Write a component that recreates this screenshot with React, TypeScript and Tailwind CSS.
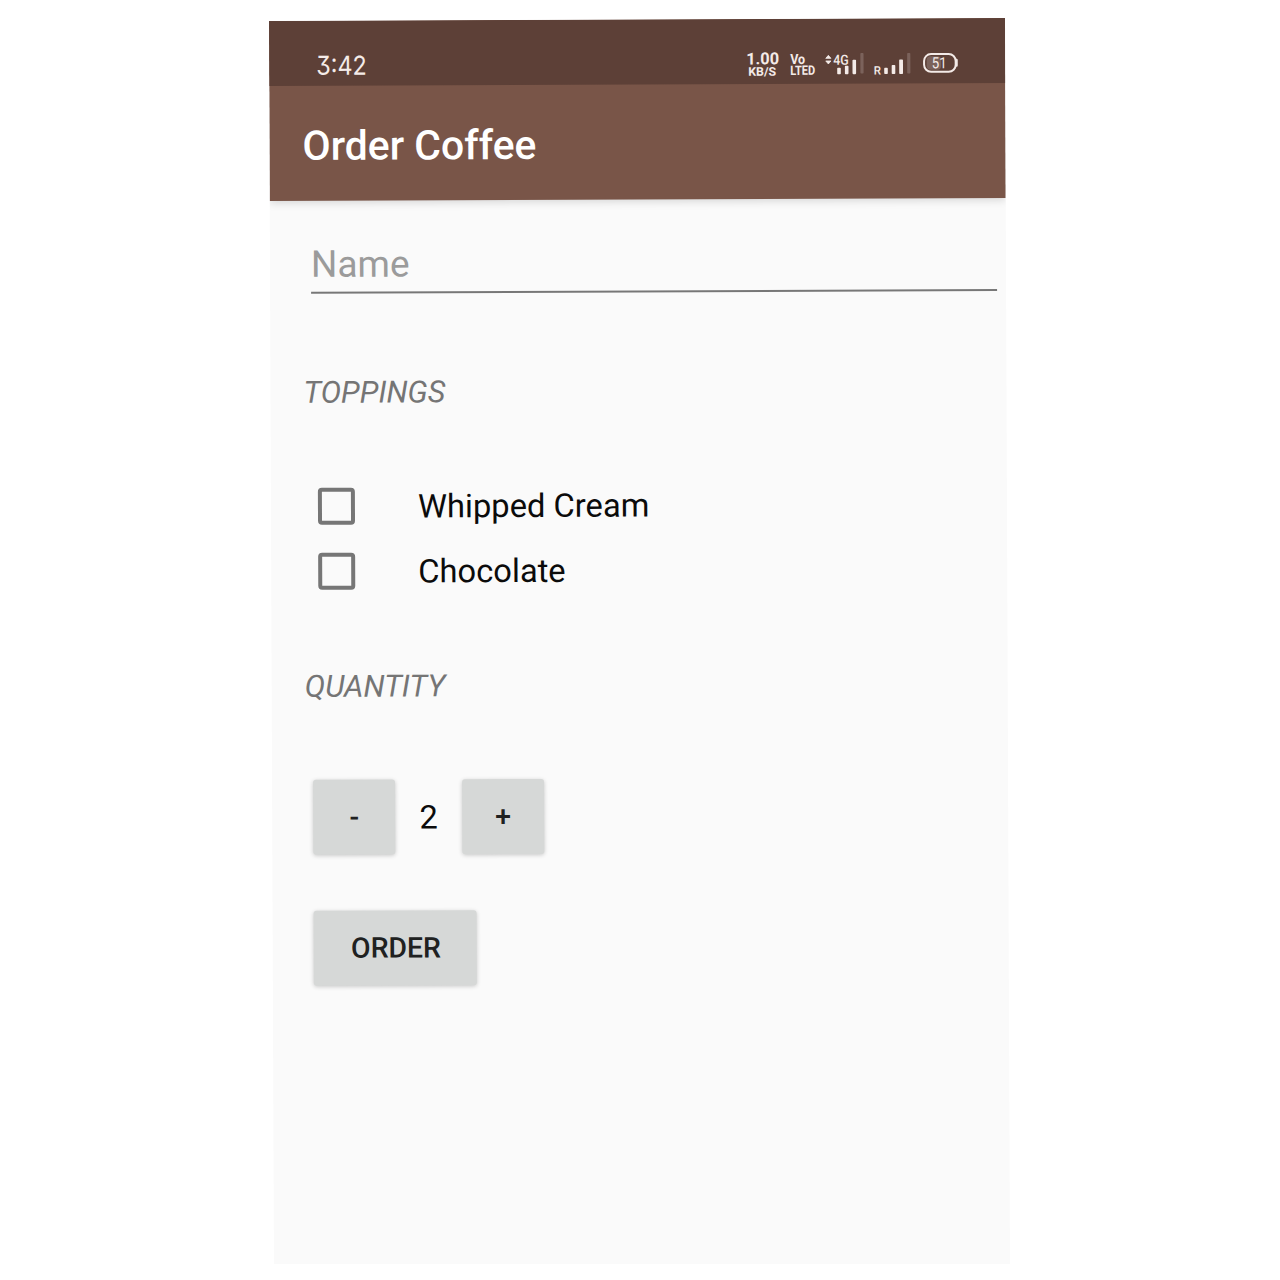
import React, { useState } from "react";

function StatusIcons() {
  return (
    <svg
      className="block"
      width="220"
      height="40"
      viewBox="740 44 220 40"
      fill="#f4ebe8"
      fontFamily="Roboto, sans-serif"
    >
      <text x="746" y="64.3" fontSize="16.5" fontWeight="700" textLength="33" lengthAdjust="spacingAndGlyphs">1.00</text>
      <text x="748" y="75.7" fontSize="12" fontWeight="700" textLength="28" lengthAdjust="spacingAndGlyphs">KB/S</text>
      <text x="790" y="64" fontSize="14" fontWeight="700" textLength="15" lengthAdjust="spacingAndGlyphs">Vo</text>
      <text x="790" y="75" fontSize="13" fontWeight="700" textLength="25" lengthAdjust="spacingAndGlyphs">LTED</text>
      <path d="M825.6 58.6 l2.6 -3 l2.6 3z M825.6 61.2 l2.6 3 l2.6 -3z" stroke="#f4ebe8" strokeWidth="0.8" strokeLinejoin="round" />
      <text x="833" y="65" fontSize="14" fontWeight="500" textLength="15.5" lengthAdjust="spacingAndGlyphs">4G</text>
      <rect x="837" y="68" width="3.6" height="6.5" rx="0.8" />
      <rect x="844.7" y="66" width="3.6" height="8.5" rx="0.8" />
      <rect x="852.3" y="60" width="3.6" height="14.5" rx="0.8" />
      <rect x="860.2" y="53.5" width="3.2" height="20.5" rx="0.8" fill="#7b625b" />
      <text x="873.5" y="75" fontSize="11.5" fontWeight="500">R</text>
      <rect x="884" y="68.3" width="3.6" height="6.2" rx="0.8" />
      <rect x="891.5" y="65.5" width="3.6" height="9" rx="0.8" />
      <rect x="899" y="60" width="3.8" height="14.5" rx="0.8" />
      <rect x="907" y="53.5" width="3.2" height="20.5" rx="0.8" fill="#7b625b" />
      <rect x="926.5" y="57" width="14.5" height="13.4" rx="4" fill="#7b625b" />
      <rect x="923.9" y="54.7" width="31.6" height="17.8" rx="7" fill="none" stroke="#f4ebe8" strokeWidth="2" />
      <path d="M955 59.5 h1.4 q1.2 0 1.2 1.5 v5 q0 1.5 -1.2 1.5 h-1.4z" />
      <text x="931.5" y="69" fontSize="15.5" textLength="15" lengthAdjust="spacingAndGlyphs">51</text>
    </svg>
  );
}

function Topping({ label }: { label: string }) {
  const [checked, setChecked] = useState(false);
  return (
    <button
      type="button"
      role="checkbox"
      aria-checked={checked}
      onClick={() => setChecked(!checked)}
      className="flex h-[65px] items-center pl-[47px]"
    >
      <span
        className={
          "box-border block size-[37px] rounded-[4px] border-4 border-[#767676] " +
          (checked ? "bg-[#795548]" : "bg-transparent")
        }
      />
      <span className="ml-[63px] pt-[1px] text-[32.7px] leading-[40px] text-[#0b0b0b]">{label}</span>
    </button>
  );
}

export default function App() {
  const [quantity, setQuantity] = useState(2);
  const raised =
    "flex h-[75px] items-center justify-center rounded-[3px] bg-[#d6d8d7] pt-[2px] text-[28.4px] font-medium text-[#202121] shadow-[0_1px_4px_rgba(0,0,0,0.2)]";
  return (
    <div className="h-[1280px] w-[1280px] overflow-hidden bg-white font-[Roboto,sans-serif]">
      <div className="h-[1264px] overflow-hidden pl-[269px] pt-[21px]">
        <main className="flex h-[1300px] w-[736px] origin-top-left rotate-[-0.23deg] flex-col overflow-hidden bg-[#fafafa]">
          <div className="shrink-0 bg-[#795548] shadow-[0_2px_9px_rgba(0,0,0,0.15)]">
            <div className="flex h-[65px] justify-between bg-[#5d4037] pl-[47px] pr-[45px]">
              <span className="mt-[25px] origin-left scale-x-90 text-[26px] leading-[40px] text-[#f4ebe8] [font-family:Inter,sans-serif] [font-feature-settings:'cv09']">
                3:42
              </span>
              <div className="mt-[25px]">
                <StatusIcons />
              </div>
            </div>
            <header className="flex h-[115px] items-center pl-[33px]">
              <h1 className="mt-[4px] text-[40.9px] font-medium leading-[48px] text-white">Order Coffee</h1>
            </header>
          </div>
          <div className="ml-[41px] mt-[40px] h-[53px] w-[686px] border-b-2 border-[#777777]">
            <div className="h-[48px] text-[37px] leading-[48px] text-[#9b9b9b]">Name</div>
          </div>
          <h2 className="mt-[79px] pl-[33px] text-[30.5px] italic leading-[40px] text-[#757575]">TOPPINGS</h2>
          <div className="mt-[61px] flex flex-col items-start">
            <Topping label="Whipped Cream" />
            <Topping label="Chocolate" />
          </div>
          <h2 className="mt-[63px] pl-[33px] text-[30.6px] italic leading-[40px] text-[#757575]">QUANTITY</h2>
          <div className="mt-[73px] flex items-center pl-[41px]">
            <button type="button" onClick={() => setQuantity(quantity - 1)} className={raised + " w-[82px]"}>
              -
            </button>
            <span className="w-[67px] text-center text-[32.7px] leading-[40px] text-[#0b0b0b]">{quantity}</span>
            <button type="button" onClick={() => setQuantity(quantity + 1)} className={raised + " w-[82px]"}>
              +
            </button>
          </div>
          <div className="mt-[56px] flex pl-[40.5px]">
            <button type="button" className={raised + " w-[163.5px] pl-[2px]"}>
              ORDER
            </button>
          </div>
        </main>
      </div>
    </div>
  );
}
